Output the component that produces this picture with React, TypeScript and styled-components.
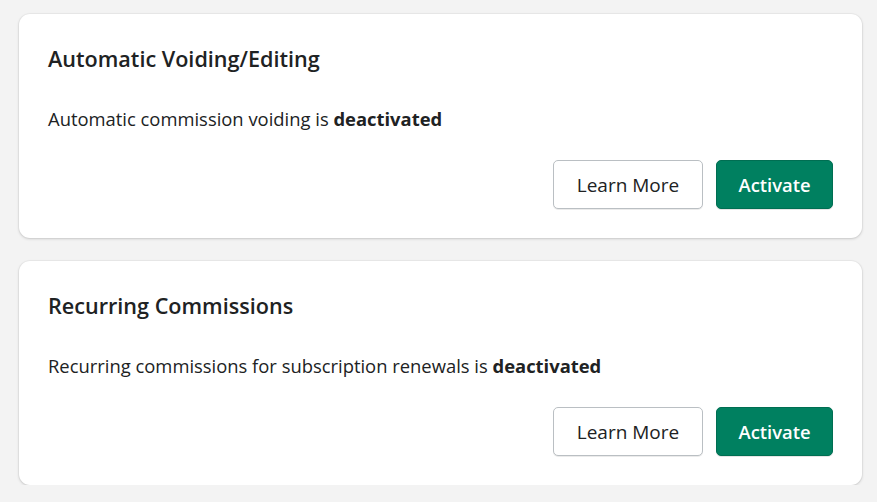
import React from "react";
import styled, { createGlobalStyle } from "styled-components";

const Global = createGlobalStyle`
  html, body { margin: 0; padding: 0; background: #f3f3f3; }
  body { font-family: "Open Sans", "Noto Sans", sans-serif; color: #202223; }
`;

const Page = styled.div`
  display: flex;
  flex-direction: column;
  gap: 23px;
  padding: 14px 15px 0 19px;
`;

const Card = styled.section`
  background: #ffffff;
  border-radius: 11px;
  box-shadow: 0 1px 3px rgba(0, 0, 0, 0.16), 0 0 0 1px rgba(0, 0, 0, 0.03);
  padding: 29px;
  height: 224px;
  box-sizing: border-box;
  display: flex;
  flex-direction: column;
`;

const Title = styled.h2`
  margin: 0;
  font-size: 21.6px;
  line-height: 32px;
  font-weight: 600;
  color: #202223;
`;

const Body = styled.p`
  margin: 32px 0 0 0;
  font-size: 18.4px;
  line-height: 24px;
  color: #202223;
  b { font-weight: 700; }
`;

const Actions = styled.div`
  margin-top: auto;
  display: flex;
  justify-content: flex-end;
  gap: 13px;
`;

const Button = styled.button<{ $primary?: boolean }>`
  height: 49px;
  box-sizing: border-box;
  padding: 0 20px;
  border-radius: 5px;
  font-family: inherit;
  font-size: ${(p) => (p.$primary ? "18.4px" : "19px")};
  font-weight: ${(p) => (p.$primary ? 600 : 500)};
  cursor: pointer;
  color: ${(p) => (p.$primary ? "#ffffff" : "#202223")};
  background: ${(p) => (p.$primary ? "#008060" : "#ffffff")};
  border: 1px solid ${(p) => (p.$primary ? "#006e52" : "#babfc3")};
  box-shadow: ${(p) =>
    p.$primary ? "0 1px 0 rgba(0,0,0,0.1)" : "0 1px 0 rgba(0,0,0,0.08)"};
  width: ${(p) => (p.$primary ? "117px" : "150px")};
`;

const items = [
  { title: "Automatic Voiding/Editing", text: "Automatic commission voiding is" },
  {
    title: "Recurring Commissions",
    text: "Recurring commissions for subscription renewals is",
  },
];

export default function App() {
  return (
    <>
      <Global />
      <Page>
        {items.map((it) => (
          <Card key={it.title}>
            <Title>{it.title}</Title>
            <Body>
              {it.text} <b>deactivated</b>
            </Body>
            <Actions>
              <Button>Learn More</Button>
              <Button $primary>Activate</Button>
            </Actions>
          </Card>
        ))}
      </Page>
    </>
  );
}
